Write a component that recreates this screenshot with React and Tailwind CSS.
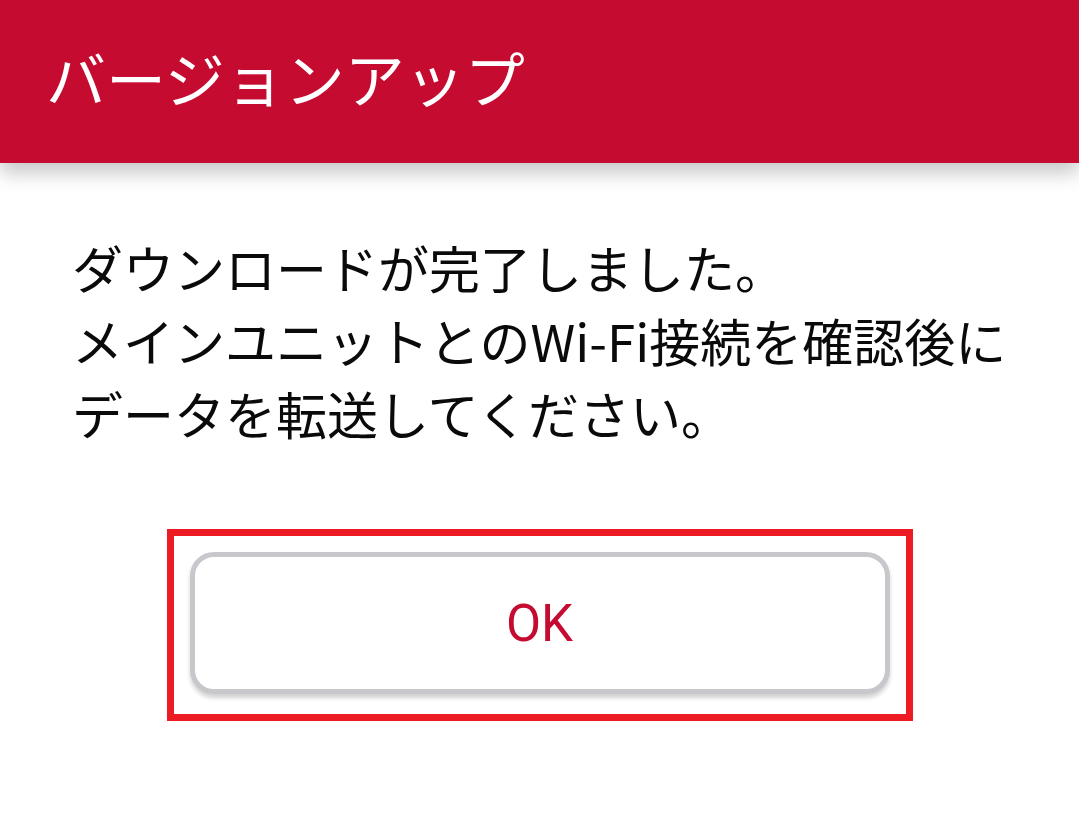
import React from "react";

const jp = "font-['Noto_Sans_CJK_JP','Noto_Sans',sans-serif]";

const App = () => {
  return (
    <div className={`w-[1079px] h-[817px] bg-white overflow-hidden ${jp}`}>
      {/* Header */}
      <div className="relative z-10 h-[163px] bg-[#C50B30] flex items-center pl-[46px] shadow-[0_10px_18px_rgba(0,0,0,0.22)]">
        <h1 className="text-[60px] leading-none text-white font-normal -mt-[9px]">
          バージョンアップ
        </h1>
      </div>

      {/* Message */}
      <div className="pt-[68px] pl-[72px]">
        <p className="text-[51px] leading-[73px] text-[#0a0a0a]">
          ダウンロードが完了しました。
          <br />
          メインユニットとのWi-Fi接続を確認後に
          <br />
          データを転送してください。
        </p>
      </div>

      {/* Highlighted button */}
      <div className="flex justify-center mt-[79px]">
        <div className="w-[746px] h-[192px] border-[7px] border-[#ED1C24] px-[16px] pt-[16px]">
          <button className="w-full h-[142px] rounded-[24px] border-[5px] border-[#C8C8CC] bg-white shadow-[0_4px_4px_rgba(0,0,0,0.18)] flex items-center justify-center">
            <span className="font-['Roboto',sans-serif] text-[51px] leading-none text-[#C50B30]">
              OK
            </span>
          </button>
        </div>
      </div>
    </div>
  );
};

export default App;
